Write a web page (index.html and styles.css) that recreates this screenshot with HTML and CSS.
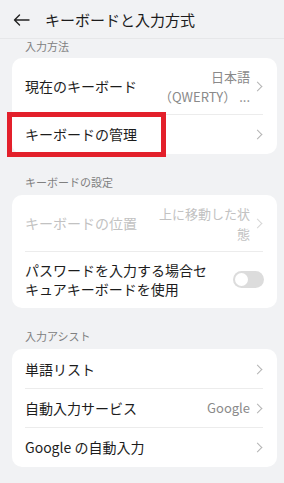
FILE: index.html
```html
<!DOCTYPE html>
<html>
<head>
  <title>キーボードと入力方式</title>
  <link rel="stylesheet" href="styles.css">
</head>
<body>

  <div class="header">
    <svg class="back" width="17" height="12" viewBox="0 0 17 12">
      <path d="M16 6H1.5M6.5 1L1.5 6l5 5" fill="none" stroke="#222" stroke-width="1.4" stroke-linecap="round" stroke-linejoin="round"/>
    </svg>
    <span class="title">キーボードと入力方式</span>
  </div>

  <p class="label first">入力方法</p>
  <div class="card">
    <div class="row tall">
      <span class="name">現在のキーボード</span>
      <span class="value"><span class="line">日本語</span><span class="line">（QWERTY） ...</span></span>
      <span class="chev"></span>
    </div>
    <div class="row">
      <span class="name">キーボードの管理</span>
      <span class="chev"></span>
    </div>
  </div>

  <p class="label">キーボードの設定</p>
  <div class="card">
    <div class="row tall off">
      <span class="name">キーボードの位置</span>
      <span class="value wrap">上に移動した状態</span>
      <span class="chev"></span>
    </div>
    <div class="row tall">
      <span class="name two">パスワードを入力する場合セキュアキーボードを使用</span>
      <span class="toggle"></span>
    </div>
  </div>

  <p class="label">入力アシスト</p>
  <div class="card">
    <div class="row">
      <span class="name">単語リスト</span>
      <span class="chev"></span>
    </div>
    <div class="row">
      <span class="name">自動入力サービス</span>
      <span class="value">Google</span>
      <span class="chev"></span>
    </div>
    <div class="row">
      <span class="name">Google の自動入力</span>
      <span class="chev"></span>
    </div>
  </div>

  <div class="mark"></div>

</body>
</html>
```

FILE: styles.css
```css
body{
  margin: 0;
  background-color: #f1f2f4;
  color: #1c1c1c;
  font-family: "Noto Sans CJK JP", "Noto Sans", sans-serif;
  position: relative;
}
.header{
  height: 38px;
  display: flex;
  align-items: center;
  padding: 0 12px 0 13px;
  border-bottom: 1px solid #e6e7e9;
}
.back{
  margin-top: 1px;
}
.title{
  margin-left: 15px;
  font-size: 15px;
  font-weight: 400;
}
.label{
  margin: 22px 0 0;
  padding: 0 25px 7px;
  font-size: 11px;
  line-height: 12px;
  color: #808080;
}
.label.first{
  margin-top: 0;
  padding-top: 1px;
  padding-bottom: 6px;
}
.card{
  margin: 0 7px 0 12px;
  background-color: white;
  border-radius: 10px;
  padding: 1px 0;
}
.row{
  display: flex;
  align-items: center;
  min-height: 38px;
  margin: 0 14px 0 13px;
  border-top: 1px solid #ececec;
}
.row:first-child{
  border-top: none;
}
.row.tall{
  min-height: 55px;
}
.name{
  flex: 1;
  font-size: 14px;
  line-height: 19px;
}
.name.two{
  flex: none;
  width: 190px;
}
.value{
  font-size: 13px;
  line-height: 20px;
  color: #8a8a8a;
  text-align: right;
  margin-left: 8px;
}
.value .line{
  display: block;
}
.value.wrap{
  width: 92px;
}
.chev{
  width: 6px;
  height: 6px;
  border-top: 1px solid #b4b4b4;
  border-right: 1px solid #b4b4b4;
  transform: rotate(45deg);
  margin: 0 2px 0 4px;
}
.off .name,
.off .value{
  color: #c2c2c2;
}
.off .chev{
  border-color: #d6d6d6;
}
.toggle{
  width: 31px;
  height: 17px;
  border-radius: 9px;
  background-color: #dcdcdc;
  position: relative;
  margin-left: auto;
  margin-right: -1px;
}
.toggle::after{
  content: "";
  position: absolute;
  left: 2px;
  top: 2px;
  width: 13px;
  height: 13px;
  border-radius: 50%;
  background-color: white;
}
.mark{
  position: absolute;
  left: 7px;
  top: 112px;
  width: 149px;
  height: 35px;
  border: 5px solid #e3202b;
}
```
